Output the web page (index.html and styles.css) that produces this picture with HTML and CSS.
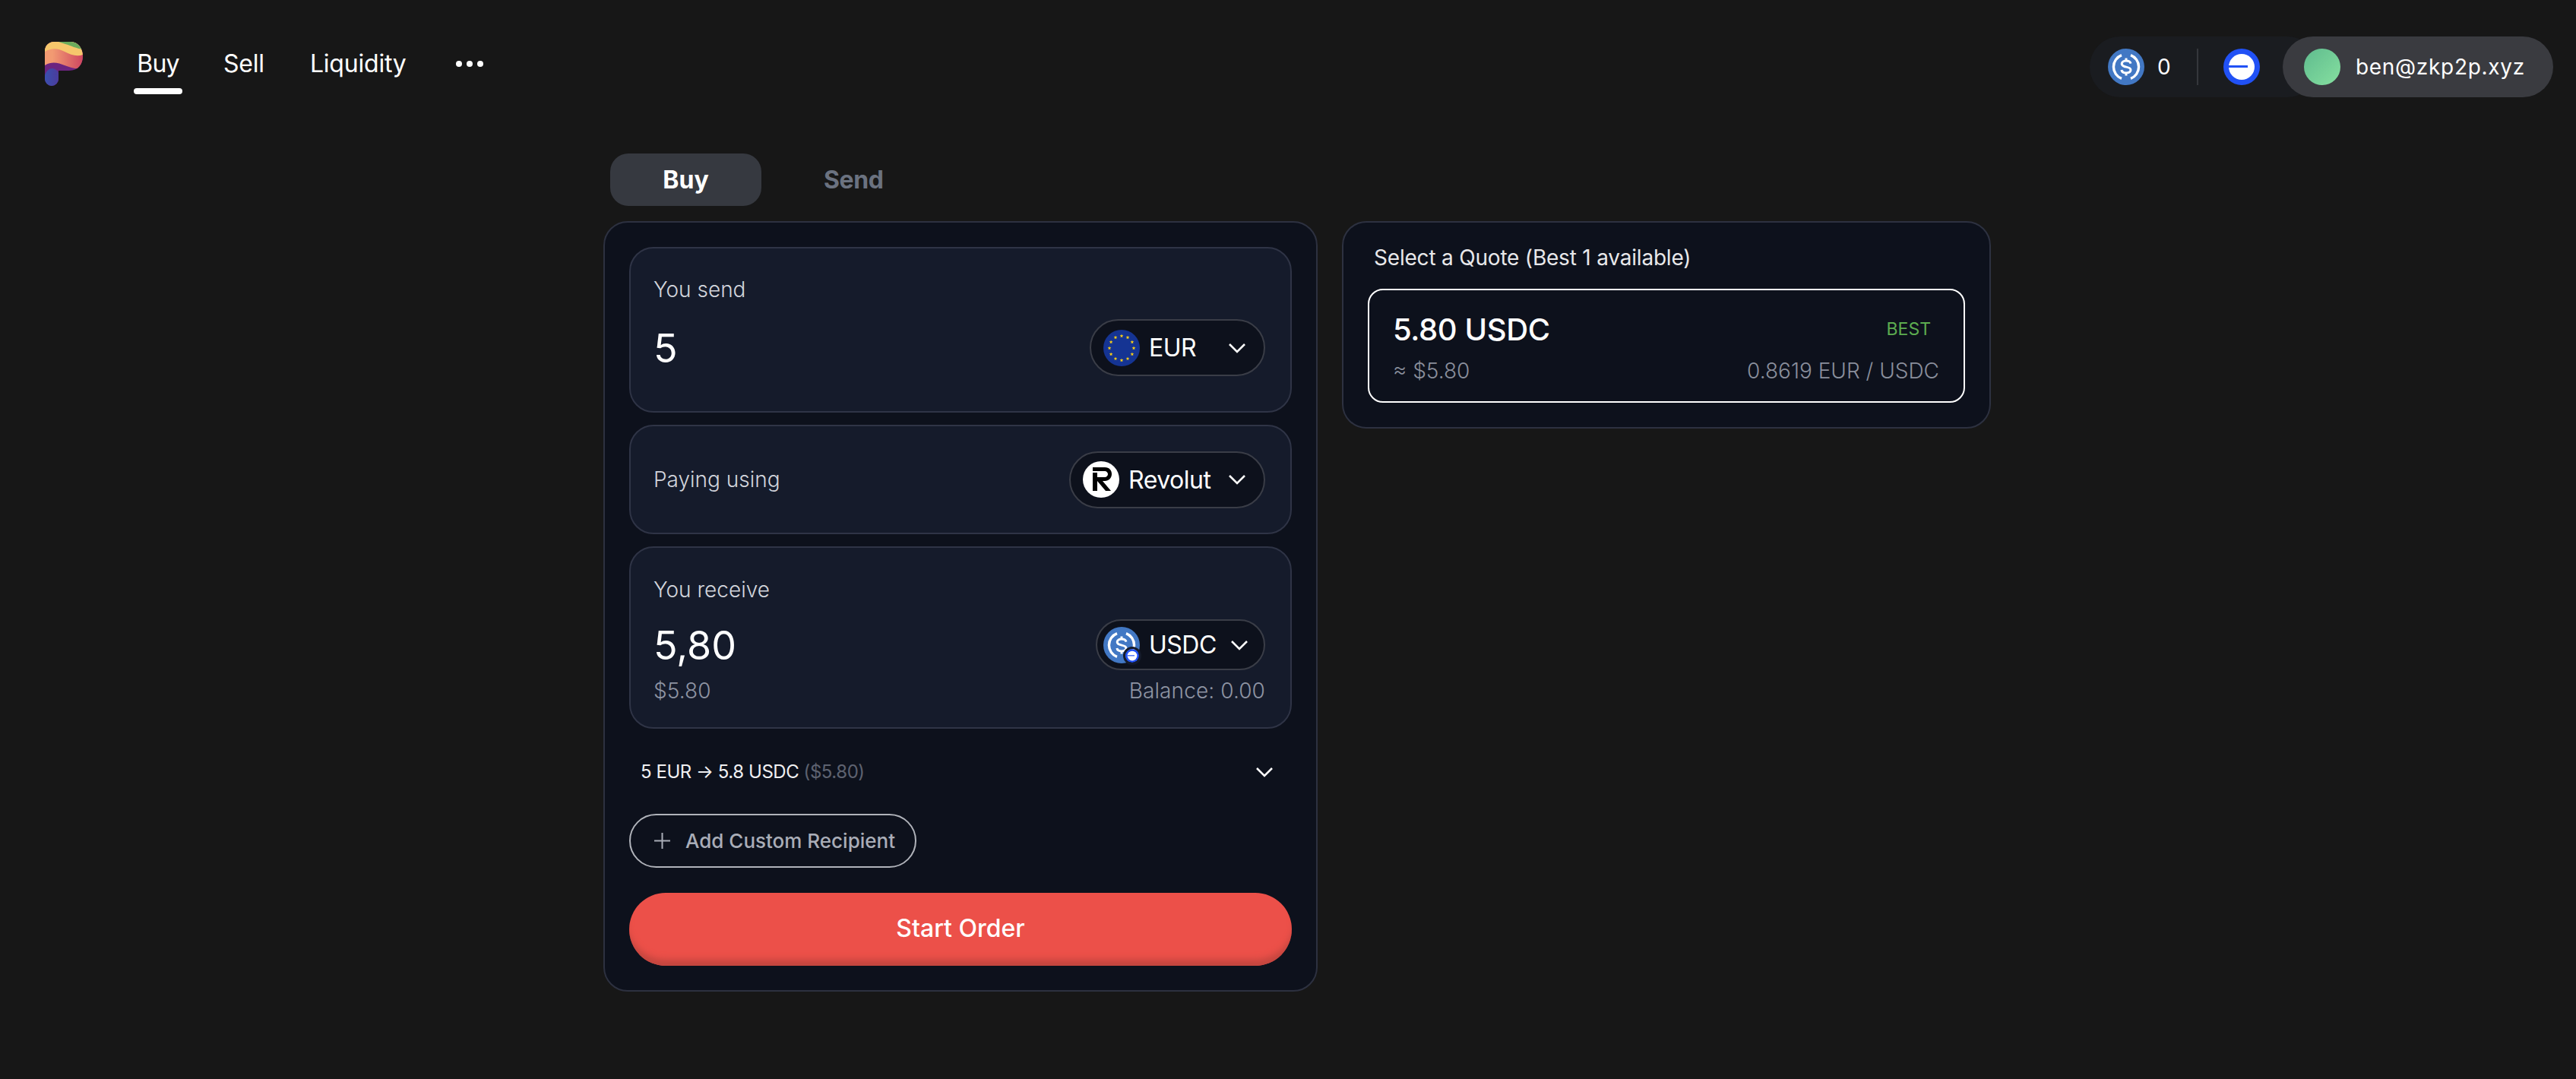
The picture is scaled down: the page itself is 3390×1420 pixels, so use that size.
FILE: index.html
```html
<!DOCTYPE html>
<html lang="en">

<head>
    <meta charset="UTF-8">
    <meta name="viewport" content="width=device-width, initial-scale=1.0">
    <title>ZKP2P</title>
    <link rel="stylesheet" href="styles.css">
</head>

<body>
    <!-- Shared icons -->
    <svg class="icon-defs" aria-hidden="true">
        <symbol id="icon-usdc" viewBox="0 0 48 48">
            <circle cx="24" cy="24" r="24" fill="#4278c4" />
            <path d="M18 8.600a16.500 16.500 0 0 0 0 30.800M30 8.600a16.500 16.500 0 0 1 0 30.800" fill="none" stroke="#fff" stroke-width="3.400" />
            <path d="M30 19.600c-.5-2.400-2.900-3.600-6-3.600-3.400 0-5.800 1.600-5.800 4.100 0 5.600 11.800 2.400 11.800 8 0 2.500-2.600 3.900-6 3.900-3.300 0-5.700-1.400-6.100-3.900M24 12.500V16M24 32v3.500" fill="none" stroke="#fff" stroke-width="3" />
        </symbol>
        <symbol id="icon-base" viewBox="0 0 48 48">
            <circle cx="24" cy="24" r="24" fill="#2151f5" />
            <circle cx="24" cy="24" r="17" fill="#fff" />
            <rect x="7" y="22" width="25" height="3" fill="#2151f5" />
        </symbol>
        <symbol id="icon-chevron" viewBox="0 0 24 14">
            <path d="M2 2l10 10L22 2" fill="none" stroke="#fff" stroke-width="2.600" />
        </symbol>
        <symbol id="icon-star" viewBox="0 0 4 4">
            <path d="M2 0l.5 1.400H4L2.800 2.300l.4 1.500L2 2.900.8 3.800l.4-1.500L0 1.400h1.500z" fill="#fcd116" />
        </symbol>
    </svg>

    <header class="topbar">
        <div class="topbar-left">
            <svg class="logo" viewBox="0 0 50 58">
                <defs>
                    <clipPath id="logoShape">
                        <path d="M12 0H34C44 0 50 9 50 19S44 38 32 38H18V49A9 9 0 0 1 0 49V12A12 12 0 0 1 12 0Z" />
                    </clipPath>
                    <linearGradient id="logoSalmon" x1="0" x2="1" y1="0" y2="0">
                        <stop offset="0.2" stop-color="#f29a72" />
                        <stop offset="1" stop-color="#cf4660" />
                    </linearGradient>
                    <linearGradient id="logoBlue" x1="0" x2="1" y1="0" y2="0">
                        <stop offset="0" stop-color="#3a4fae" />
                        <stop offset="1" stop-color="#4b3c9c" />
                    </linearGradient>
                </defs>
                <g clip-path="url(#logoShape)">
                    <rect width="50" height="58" fill="#6c2480" />
                    <path d="M0 0H50V34C44 37 34 34 26 31S10 25 0 31Z" fill="url(#logoSalmon)" />
                    <path d="M0 0H50V17C42 20 34 17 26 13S10 7 0 13Z" fill="#f6c76c" />
                    <path d="M18 0H50V10C42 9 34 5 27 3Z" fill="#6bab5c" />
                    <path d="M0 44C2 38 6 35 10 35S18 39 18 42V58H0Z" fill="url(#logoBlue)" />
                </g>
            </svg>
            <nav class="nav">
                <a class="nav-link active">Buy</a>
                <a class="nav-link">Sell</a>
                <a class="nav-link">Liquidity</a>
                <span class="nav-more"><i></i><i></i><i></i></span>
            </nav>
        </div>
        <div class="topbar-right">
            <div class="wallet">
                <svg class="coin"><use href="#icon-usdc" /></svg>
                <span class="wallet-amount">0</span>
                <span class="wallet-divider"></span>
                <svg class="coin"><use href="#icon-base" /></svg>
            </div>
            <div class="account">
                <span class="avatar"></span>
                <span class="account-name">ben@zkp2p.xyz</span>
            </div>
        </div>
    </header>

    <main class="page">
        <section class="left-col">
            <div class="tabs">
                <div class="tab active">Buy</div>
                <div class="tab">Send</div>
            </div>
            <div class="card">
                <!-- You send -->
                <div class="field field-send">
                    <div class="field-label">You send</div>
                    <div class="field-row">
                        <div class="amount">5</div>
                        <div class="select select-eur">
                            <svg class="coin" viewBox="0 0 48 48">
                                <circle cx="24" cy="24" r="24" fill="#153493" />
                                <use href="#icon-star" x="21.500" y="5.500" width="5" height="5" />
                                <use href="#icon-star" x="29.500" y="7.600" width="5" height="5" />
                                <use href="#icon-star" x="35.400" y="13.500" width="5" height="5" />
                                <use href="#icon-star" x="37.500" y="21.500" width="5" height="5" />
                                <use href="#icon-star" x="35.400" y="29.500" width="5" height="5" />
                                <use href="#icon-star" x="29.500" y="35.400" width="5" height="5" />
                                <use href="#icon-star" x="21.500" y="37.500" width="5" height="5" />
                                <use href="#icon-star" x="13.500" y="35.400" width="5" height="5" />
                                <use href="#icon-star" x="7.600" y="29.500" width="5" height="5" />
                                <use href="#icon-star" x="5.500" y="21.500" width="5" height="5" />
                                <use href="#icon-star" x="7.600" y="13.500" width="5" height="5" />
                                <use href="#icon-star" x="13.500" y="7.600" width="5" height="5" />
                            </svg>
                            <span class="select-text">EUR</span>
                            <svg class="chevron chevron-eur"><use href="#icon-chevron" /></svg>
                        </div>
                    </div>
                </div>

                <!-- Payment method -->
                <div class="field field-pay">
                    <div class="field-label">Paying using</div>
                    <div class="select select-revolut">
                        <svg class="coin" viewBox="0 0 48 48">
                            <circle cx="24" cy="24" r="24" fill="#fff" />
                            <path d="M13 8H29C35 8 38 12 38 17S34 26 29 26H26L37 39H30L19 26V21H29C31 21 33 19 33 17S31 13 29 13H13Z" fill="#000" />
                            <rect x="13" y="15" width="6" height="24" fill="#000" />
                        </svg>
                        <span class="select-text">Revolut</span>
                        <svg class="chevron"><use href="#icon-chevron" /></svg>
                    </div>
                </div>

                <!-- You receive -->
                <div class="field field-receive">
                    <div class="field-label">You receive</div>
                    <div class="field-row">
                        <div class="amount">5,80</div>
                        <div class="select select-usdc">
                            <span class="coin-wrap">
                                <svg class="coin"><use href="#icon-usdc" /></svg>
                                <svg class="coin-badge"><use href="#icon-base" /></svg>
                            </span>
                            <span class="select-text">USDC</span>
                            <svg class="chevron"><use href="#icon-chevron" /></svg>
                        </div>
                    </div>
                    <div class="field-foot">
                        <span>$5.80</span>
                        <span>Balance: 0.00</span>
                    </div>
                </div>

                <div class="summary">
                    <div>5 EUR → 5.8 USDC <span class="summary-usd">($5.80)</span></div>
                    <svg class="chevron"><use href="#icon-chevron" /></svg>
                </div>

                <button class="add-btn">
                    <svg class="plus" viewBox="0 0 21 21">
                        <path d="M10.500 0v21M0 10.500h21" stroke="#a9adb7" stroke-width="2" />
                    </svg>
                    Add Custom Recipient
                </button>

                <button class="start-btn">Start Order</button>
            </div>
        </section>

        <aside class="card quote-card">
            <div class="quote-title">Select a Quote (Best 1 available)</div>
            <div class="quote">
                <div class="quote-row">
                    <span class="quote-amount">5.80 USDC</span>
                    <span class="quote-best">BEST</span>
                </div>
                <div class="quote-row quote-sub">
                    <span>≈ $5.80</span>
                    <span>0.8619 EUR / USDC</span>
                </div>
            </div>
        </aside>
    </main>
</body>

</html>
```

FILE: styles.css
```css
* {
    box-sizing: border-box;
}

body {
    font-family: 'Inter', 'Liberation Sans', sans-serif;
    background-color: #171717;
    color: #fff;
    margin: 0;
    height: 1420px;
    overflow: hidden;
}

.icon-defs {
    position: absolute;
    width: 0;
    height: 0;
}

/* Top bar */
.topbar {
    display: flex;
    justify-content: space-between;
    align-items: flex-start;
    padding: 48px 30px 0 59px;
    height: 202px;
}

.topbar-left {
    display: flex;
    align-items: flex-start;
    gap: 67px;
}

.logo {
    width: 50px;
    height: 58px;
    margin-top: 7px;
}

.nav {
    display: flex;
    align-items: flex-start;
    gap: 48px;
    margin-top: 16px;
}

.nav-link {
    display: block;
    font-size: 32px;
    line-height: 40px;
    padding: 0 6px;
    text-align: center;
    letter-spacing: -0.2px;
}

.nav-link.active {
    width: 64px;
    padding: 0;
    letter-spacing: -0.8px;
}

.nav-link.active::after {
    content: '';
    display: block;
    height: 8px;
    margin-top: 12px;
    border-radius: 4px;
    background-color: #fff;
}

.nav-more {
    display: flex;
    gap: 6px;
    height: 40px;
    margin-left: 11px;
    align-items: center;
}

.nav-more i {
    width: 8px;
    height: 8px;
    border-radius: 50%;
    background-color: #fff;
}

.topbar-right {
    display: flex;
}

.wallet {
    display: flex;
    align-items: center;
    height: 80px;
    width: 300px;
    margin-right: -46px;
    padding-left: 24px;
    border-radius: 40px;
    background-color: #1a1c20;
}

.coin {
    display: block;
    width: 48px;
    height: 48px;
    flex: none;
}

.wallet-amount {
    font-size: 28px;
    margin-left: 17px;
}

.wallet-divider {
    width: 2px;
    height: 48px;
    margin: 0 33px 0 34px;
    background-color: #35373c;
}

.account {
    position: relative;
    display: flex;
    align-items: center;
    gap: 20px;
    height: 80px;
    width: 356px;
    padding-left: 28px;
    border-radius: 40px;
    background-color: #3a3b40;
}

.avatar {
    width: 48px;
    height: 48px;
    border-radius: 50%;
    background: linear-gradient(135deg, #5fbb8e, #86e0a0);
}

.account-name {
    font-size: 28px;
    letter-spacing: 0.7px;
}

/* Page columns */
.page {
    display: flex;
    align-items: flex-start;
    gap: 32px;
    padding-left: 794px;
}

.left-col {
    width: 940px;
}

.tabs {
    display: flex;
    align-items: center;
    gap: 44px;
    height: 69px;
    margin: 0 0 20px 9px;
}

.tab {
    display: flex;
    align-items: center;
    justify-content: center;
    font-size: 32px;
    font-weight: 700;
    color: #6b7280;
}

.tab.active {
    width: 199px;
    height: 69px;
    border-radius: 24px;
    background-color: #363940;
    color: #fff;
}

.tab:last-child {
    margin-left: 38px;
    letter-spacing: -0.4px;
}

.card {
    background-color: #0d111c;
    border: 2px solid #2d3140;
    border-radius: 32px;
    padding: 32px;
}

/* Form fields */
.field {
    background-color: #151b2b;
    border: 2px solid #2f3446;
    border-radius: 32px;
    padding: 0 33px 0 30px;
    margin-bottom: 16px;
}

.field-send {
    height: 218px;
    padding-top: 36px;
}

.field-pay {
    display: flex;
    align-items: center;
    justify-content: space-between;
    height: 144px;
}

.field-receive {
    height: 240px;
    padding-top: 37px;
    margin-bottom: 0;
}

.field-label {
    font-size: 28px;
    line-height: 36px;
    font-weight: 300;
    color: #d2d5dc;
}

.field-row {
    display: flex;
    align-items: center;
    justify-content: space-between;
    margin-top: 21px;
}

.amount {
    font-size: 52px;
    line-height: 60px;
    padding-top: 2px;
}

.select {
    display: flex;
    align-items: center;
    height: 75px;
    border: 2px solid #3a3d47;
    border-radius: 38px;
    background-color: #0d111c;
    padding: 0 23px 0 16px;
}

.select-eur {
    width: 231px;
}

.select-revolut {
    width: 258px;
}

.select-usdc {
    width: 223px;
    height: 67px;
    padding-left: 8px;
    padding-right: 20px;
}

.select-text {
    font-size: 32px;
    letter-spacing: -0.5px;
    margin-left: 12px;
}

.chevron {
    display: block;
    width: 24px;
    height: 14px;
    margin-left: auto;
    flex: none;
}

.coin-wrap {
    position: relative;
    display: block;
    width: 48px;
    height: 48px;
}

.coin-badge {
    position: absolute;
    right: -2px;
    bottom: -2px;
    width: 24px;
    height: 24px;
    border: 3px solid #151b2b;
    border-radius: 50%;
}

.field-foot {
    display: flex;
    justify-content: space-between;
    margin-top: 10px;
    font-size: 28px;
    line-height: 34px;
    font-weight: 300;
    letter-spacing: 0.1px;
    color: #8e94a3;
}

.summary {
    display: flex;
    align-items: center;
    justify-content: space-between;
    margin-top: 39px;
    padding: 0 24px 0 15px;
    font-size: 24px;
    letter-spacing: -0.45px;
    line-height: 36px;
    color: #f0f0f2;
}

.summary-usd {
    color: #5d6270;
}

.add-btn {
    display: flex;
    align-items: center;
    gap: 20px;
    width: 378px;
    height: 71px;
    margin-top: 37px;
    padding: 0 0 0 31px;
    border: 2px solid #b0b3ba;
    border-radius: 36px;
    background: transparent;
    font-family: inherit;
    font-size: 26px;
    font-weight: 500;
    color: #a9adb7;
}

.plus {
    width: 21px;
    height: 21px;
}

.start-btn {
    display: block;
    width: 100%;
    height: 96px;
    margin-top: 33px;
    padding: 0 0 4px;
    border: none;
    border-radius: 48px;
    background-color: #ec5049;
    box-shadow: inset 0 -12px 8px -4px #c3463f;
    font-family: inherit;
    font-size: 32px;
    font-weight: 500;
    color: #fff;
}

/* Quote list */
.quote-card {
    width: 854px;
    margin-top: 89px;
    padding-top: 28px;
}

.quote-title {
    font-size: 28px;
    letter-spacing: -0.2px;
    line-height: 36px;
    color: #e8e8ea;
    padding-left: 8px;
}

.quote {
    height: 150px;
    margin-top: 23px;
    padding: 29px 32px 0 31px;
    border: 2px solid #fff;
    border-radius: 20px;
}

.quote-row {
    display: flex;
    align-items: center;
    justify-content: space-between;
    height: 44px;
}

.quote-amount {
    font-size: 40px;
    letter-spacing: -0.4px;
    font-weight: 500;
}

.quote-best {
    font-size: 23px;
    color: #5cac50;
    padding-right: 11px;
}

.quote-sub {
    height: 36px;
    margin-top: 15px;
    font-size: 28px;
    font-weight: 300;
    color: #8a8f9c;
}
```
